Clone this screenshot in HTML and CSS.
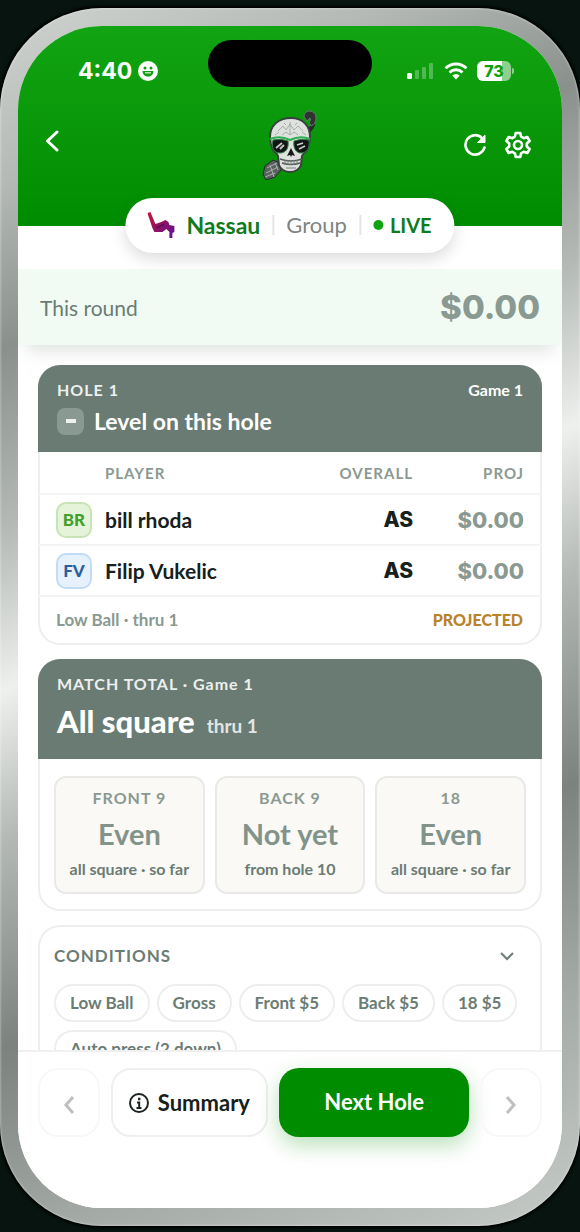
FILE: index.html
```html
<!DOCTYPE html>
<html lang="en">
<head>
    <meta charset="UTF-8">
    <meta name="viewport" content="width=device-width, initial-scale=1.0">
    <title>Nassau - Hole 1</title>
    <link rel="stylesheet" href="styles.css">
</head>
<body>
<div class="phone">
    <div class="screen">
        <!-- Header -->
        <header class="top">
            <div class="status-bar">
                <div class="clock">
                    <span>4:40</span>
                    <svg width="20" height="20" viewBox="0 0 20 20"><circle cx="10" cy="10" r="10" fill="#fff"/><circle cx="7" cy="7" r="1.500" fill="#0e9f0e"/><circle cx="13" cy="7" r="1.500" fill="#0e9f0e"/><path d="M4.500 10h11c0 3.500-2.500 5.500-5.500 5.500s-5.500-2-5.500-5.500z" fill="#0e9f0e"/><path d="M7 11h6v1.500H7z" fill="#fff" opacity=".7"/></svg>
                </div>
                <div class="island"></div>
                <div class="signals">
                    <svg width="28" height="18" viewBox="0 0 28 18" fill="#fff"><rect x="0" y="11" width="5" height="6" rx="1.500"/><g opacity=".28"><rect x="8" y="8" width="4" height="9" rx="1"/><rect x="15" y="5" width="4" height="12" rx="1"/><rect x="22" y="1" width="4" height="16" rx="1"/></g></svg>
                    <svg width="24" height="18" viewBox="0 0 24 18" fill="none" stroke="#fff" stroke-width="2.800"><path d="M1.500 6.300a15 15 0 0 1 21 0"/><path d="M5.500 10.400a9.300 9.300 0 0 1 13 0"/><path d="M8.300 13.400a5.300 5.300 0 0 1 7.400 0L12 17.500z" fill="#fff" stroke="none"/></svg>
                    <div class="battery">73</div>
                </div>
            </div>
            <nav class="nav">
                <button class="icon-btn back" aria-label="Back">
                    <svg width="14" height="22" viewBox="0 0 14 22" fill="none" stroke="#fff" stroke-width="3" stroke-linecap="round" stroke-linejoin="round"><path d="M12 2 2.500 11l9.500 9"/></svg>
                </button>
                <svg class="logo" width="56" height="70" viewBox="0 0 56 70">
                    <!-- club behind the skull -->
                    <path d="M43 26l7-9q2-3 0-7" fill="none" stroke="#252b29" stroke-width="4"/>
                    <path d="M42 7q0-6 6-6 6 1 6 7 0 6-5 8l-2-4q3-2 1-4l-3 3z" fill="#2e3331" stroke="#6c7570" stroke-width="1"/>
                    <path d="M3 56l8-6 7 3 1 7-6 7-9 3-3-6z" fill="#59605d" stroke="#252b29" stroke-width="1"/>
                    <path d="M5 58l10-5M4 63l12-6M3 67l10-4M8 55l4 12M13 53l3 7" stroke="#a9afac" stroke-width="1"/>
                    <!-- skull -->
                    <path d="M29 8C16 8 8 16 8 27c0 6 1 9 3 13 2 3 4 3 5 6l1 9c1 4 6 7 11 7s10-3 11-7l1-9c1-3 4-3 5-6 2-4 3-8 3-13C48 16 41 8 29 8z" fill="#dfe1df" stroke="#39403d" stroke-width="2"/>
                    <path d="M16 21l5-5 3 4 4-6 4 6 4-4 5 5M20 25l4-3 4 3 4-3 4 3M28 12v12M13 25l4-3M44 25l-4-3M22 13l2 2M35 13l-2 2" fill="none" stroke="#a7ada9" stroke-width="1"/>
                    <path d="M8 29q10-4 20 1 10-5 20-1" fill="none" stroke="#2fae52" stroke-width="2"/>
                    <path d="M11 30q8-2 15 1c1 7-2 12-8 12s-9-5-7-13zM47 30q-8-2-15 1c-1 7 2 12 7 12 6 0 9-5 8-13z" fill="#111614" stroke="#2f7a48" stroke-width="1"/>
                    <path d="M14 38l6-5M18 39l4-4M35 35l6-2M37 39l6-3" stroke="#c6cac8" stroke-width="1.800"/>
                    <path d="M29 38l-4 8 3-1 1 2 1-2 3 1z" fill="#151918"/>
                    <path d="M18 49q11 4 22 0M20 53q9 3 18 0" fill="none" stroke="#515855" stroke-width="1.400"/>
                    <path d="M23 50v5M26 50v5M29 50v5M32 50v5M35 50v5M24 58h10" fill="none" stroke="#7d8481" stroke-width="1"/>
                </svg>
                <div class="actions">
                    <button class="icon-btn" aria-label="Refresh">
                        <svg width="24" height="24" viewBox="0 0 24 24" fill="none" stroke="#fff" stroke-width="2.600" stroke-linecap="round"><path d="M21.500 14.500a9.700 9.700 0 1 1-2.200-9.200"/><path d="M15 9.500h7V2.500z" fill="#fff" stroke="#fff" stroke-width="1" stroke-linejoin="round"/></svg>
                    </button>
                    <button class="icon-btn" aria-label="Settings">
                        <svg width="28" height="28" viewBox="0 0 28 28" fill="none" stroke="#fff" stroke-width="2.600" stroke-linejoin="round"><path d="M11.700 2h4.600l.8 3.700 2.600 1.500 3.600-1.200 2.300 4-2.800 2.500v3l2.800 2.500-2.300 4-3.600-1.200-2.600 1.500-.8 3.700h-4.600l-.8-3.700-2.600-1.500L4.700 22l-2.300-4 2.800-2.500v-3L2.400 10l2.300-4 3.600 1.200 2.600-1.500z"/><circle cx="14" cy="14" r="4"/></svg>
                    </button>
                </div>
            </nav>
            <div class="game-pill">
                <svg width="28" height="28" viewBox="0 0 28 28">
                    <defs><linearGradient id="legs" x1="0" y1="0" x2="1" y2="1"><stop offset="0" stop-color="#c8143c"/><stop offset=".5" stop-color="#8f1260"/><stop offset="1" stop-color="#5b149c"/></linearGradient></defs>
                    <path d="M0 2l3-1 5 12 6-2 4-2 3 2 1 3 5 1 0 6-2 1v5h-3v-6l-3-3-4 3-8 0-2-4z" fill="url(#legs)"/>
                    <path d="M9 17l8-4" stroke="#5a1060" stroke-width="1.500"/>
                </svg>
                <strong>Nassau</strong>
                <i class="bar"></i>
                <span class="kind">Group</span>
                <i class="bar"></i>
                <span class="live"><i class="dot"></i>LIVE</span>
            </div>
        </header>

        <!-- Money for the round -->
        <section class="round">
            <span>This round</span>
            <b>$0.00</b>
        </section>

        <main class="content">
            <!-- Hole -->
            <section class="card">
                <div class="card-head">
                    <div class="head-line"><span class="caps">HOLE 1</span><span class="game-no">Game 1</span></div>
                    <h2><span class="level"></span>Level on this hole</h2>
                </div>
                <table class="players">
                    <thead>
                        <tr><th class="c-avatar"></th><th class="c-name">PLAYER</th><th class="c-overall">OVERALL</th><th class="c-proj">PROJ</th></tr>
                    </thead>
                    <tbody>
                        <tr><td><span class="avatar green">BR</span></td><td class="name">bill rhoda</td><td class="overall">AS</td><td class="proj">$0.00</td></tr>
                        <tr><td><span class="avatar blue">FV</span></td><td class="name">Filip Vukelic</td><td class="overall">AS</td><td class="proj">$0.00</td></tr>
                    </tbody>
                </table>
                <div class="card-foot"><span>Low Ball · thru 1</span><span class="projected">PROJECTED</span></div>
            </section>

            <!-- Match -->
            <section class="card">
                <div class="card-head match">
                    <div class="caps">MATCH TOTAL · Game 1</div>
                    <div class="total"><h1>All square</h1><span>thru 1</span></div>
                </div>
                <div class="tiles">
                    <div class="tile"><span class="t-label">FRONT 9</span><span class="t-value">Even</span><span class="t-note">all square · so far</span></div>
                    <div class="tile"><span class="t-label">BACK 9</span><span class="t-value">Not yet</span><span class="t-note">from hole 10</span></div>
                    <div class="tile"><span class="t-label">18</span><span class="t-value">Even</span><span class="t-note">all square · so far</span></div>
                </div>
            </section>

            <!-- Conditions -->
            <section class="card conditions">
                <button class="cond-head">CONDITIONS
                    <svg width="16" height="10" viewBox="0 0 16 10" fill="none" stroke="#6b7c74" stroke-width="2"><path d="M2 2l6 6 6-6"/></svg>
                </button>
                <div class="chips">
                    <span>Low Ball</span><span>Gross</span><span>Front $5</span><span>Back $5</span><span>18 $5</span><span>Auto press (2 down)</span>
                </div>
            </section>
        </main>

        <!-- Bottom bar -->
        <footer class="bottom">
            <button class="step" aria-label="Previous hole" disabled>
                <svg width="12" height="18" viewBox="0 0 12 18" fill="none" stroke="#bdc0be" stroke-width="3"><path d="M10 1 3 9l7 8"/></svg>
            </button>
            <button class="summary">
                <svg width="20" height="20" viewBox="0 0 20 20" fill="none" stroke="#1c2421" stroke-width="2"><circle cx="10" cy="10" r="9"/><path d="M8 9.500h2.200V15M7.500 15h5"/><path d="M9 6h2.400" stroke-width="2.400"/></svg>
                Summary
            </button>
            <button class="next">Next Hole</button>
            <button class="step" aria-label="Next hole" disabled>
                <svg width="12" height="18" viewBox="0 0 12 18" fill="none" stroke="#bdc0be" stroke-width="3"><path d="M2 1l7 8-7 8"/></svg>
            </button>
        </footer>
    </div>
</div>
</body>
</html>
```
FILE: styles.css
```css
* { box-sizing: border-box; }
body { margin: 0; padding: 8px 0 6px; height: 100vh; background: #07140f; font-family: Lato, "Liberation Sans", sans-serif; color: #16201c; }
button { font-family: inherit; padding: 0; border: none; background: none; cursor: pointer; }
h1, h2 { margin: 0; }

.phone { height: 100%; padding: 18px; border-radius: 102px; background: linear-gradient(155deg, #d0d3d0 0%, #b4b9b5 12%, #8a908b 23%, #b4b9b5 35%, #eef0ee 46%, #b4b9b5 56%, #7c837e 70%, #a4aaa6 84%, #c6cbc7 100%); box-shadow: inset 0 0 2px 1px rgba(255,255,255,0.3), 0 0 3px 2px #000; }
.screen { height: 100%; border-radius: 84px; overflow: hidden; background: #fff; display: flex; flex-direction: column; }

.top { position: relative; flex: none; padding: 14px 20px 46px; background: linear-gradient(#12a412, #008c00); }
.status-bar { display: grid; grid-template-columns: 1fr 164px 1fr; align-items: center; }
.clock { display: flex; align-items: center; gap: 6px; padding: 14px 0 0 40px; color: #fff; font: 700 23px/32px Inter, sans-serif; }
.island { height: 47px; border-radius: 24px; background: #000; }
.signals { display: flex; align-items: center; gap: 9px; padding: 14px 0 0 35px; }
.battery { position: relative; width: 34px; height: 20px; border-radius: 6px; background: linear-gradient(90deg, #fff 75%, #8fd08f 75%); color: #0e9f0e; font: 800 16px/20px Inter, sans-serif; text-align: center; }
.battery::after { content: ""; position: absolute; right: -3px; top: 7px; width: 2px; height: 6px; border-radius: 0 2px 2px 0; background: #8fd08f; }

.nav { display: grid; grid-template-columns: 1fr 56px 1fr; align-items: center; padding-top: 23px; }
.icon-btn { display: flex; }
.back { padding: 0 0 8px 7px; }
.actions { display: flex; align-items: center; justify-content: flex-end; gap: 17px; padding-right: 10px; }

.game-pill { position: absolute; left: 50%; bottom: -27px; transform: translateX(-50%); display: flex; align-items: center; height: 55px; padding: 0 23px 2px 22px; border-radius: 28px; background: #fff; box-shadow: 0 6px 16px rgba(0,0,0,0.14); font-size: 22px; white-space: nowrap; }
.game-pill strong { margin-left: 11px; color: #117a1c; font-size: 23px; }
.bar { width: 2px; height: 20px; margin: 0 12px; background: #e4e6e5; }
.kind { color: #7c8582; }
.live { display: flex; align-items: center; gap: 7px; color: #117a1c; font-size: 20px; font-weight: 700; }
.dot { width: 10px; height: 10px; border-radius: 50%; background: #0fa30f; }

.round { position: relative; flex: none; display: flex; align-items: center; justify-content: space-between; height: 76px; margin-top: 43px; padding: 0 22px; background: #f1fbf3; box-shadow: 0 14px 16px -8px rgba(60,90,70,0.16); color: #6b7c74; font-size: 21px; }
.round b { color: #8a9991; font: 800 33px/40px Inter, sans-serif; }

.content { flex: 1; min-height: 0; overflow-y: auto; scrollbar-width: none; padding: 20px 20px 0; display: flex; flex-direction: column; gap: 14px; }
/* inset line, so the dark heads can run to the edge */
.card { flex: none; border-radius: 22px; background: #fff; box-shadow: inset 0 0 0 2px #eeefed; overflow: hidden; }
.card-head { height: 87px; padding: 13px 19px 0; background: #697b72; color: #fff; }
.head-line { display: flex; justify-content: space-between; }
.caps { font-size: 16px; line-height: 24px; font-weight: 700; letter-spacing: 1px; color: #edf0ee; }
.game-no { font-size: 16px; line-height: 24px; font-weight: 700; }
.card-head h2 { display: flex; align-items: center; gap: 10px; margin-top: 4px; font-size: 23px; line-height: 30px; }
.level { width: 27px; height: 27px; border-radius: 8px; background: #8a9991; display: flex; align-items: center; justify-content: center; }
.level::before { content: ""; width: 10px; height: 4px; background: #eef1ef; }

.players { width: 100%; border-collapse: separate; border-spacing: 0; table-layout: fixed; }
.players th, .players td { padding: 0; border-bottom: 2px solid #f3f4f3; }
.players th { height: 43px; color: #8a9991; font-size: 15px; font-weight: 700; letter-spacing: 1px; text-align: left; }
.players td { height: 51px; }
.players .c-avatar { width: 67px; }
.players .c-overall { width: 110px; text-align: right; }
.players .c-proj { width: 129px; }
.players .c-proj, .players .proj { padding-right: 18px; text-align: right; }
.overall { text-align: right; }
.avatar { display: block; width: 36px; height: 36px; margin-left: 18px; border: 2px solid; border-radius: 10px; font-size: 17px; line-height: 31px; font-weight: 900; text-align: center; }
.avatar.green { border-color: #c9e4b4; background: #e5f4d9; color: #43a02a; }
.avatar.blue { border-color: #c3dcf6; background: #e6f1fd; color: #2d5f9e; }
.name { font-size: 21px; font-weight: 700; line-height: 24px; }
.overall { font: 800 21px/24px Inter, sans-serif; }
.proj { color: #8a9991; font: 800 22px/24px Inter, sans-serif; }
.card-foot { display: flex; justify-content: space-between; align-items: center; height: 48px; padding: 0 19px 4px 18px; color: #8a9991; font-size: 17px; font-weight: 700; }
.projected { color: #b9822c; font-size: 16px; font-weight: 900; }

.match { height: 100px; }
.total { display: flex; align-items: baseline; gap: 12px; margin-top: 4px; }
.total h1 { font-size: 31px; line-height: 42px; font-weight: 900; }
.total span { color: #e1e6e3; font-size: 19px; font-weight: 700; }
.tiles { display: grid; grid-template-columns: repeat(3, 1fr); gap: 10px; padding: 17px 16px; }
.tile { display: flex; flex-direction: column; align-items: center; height: 118px; padding-top: 9px; border: 2px solid #e9eae7; border-radius: 12px; background: #faf9f6; white-space: nowrap; }
.t-label { color: #8a9991; font-size: 16px; line-height: 22px; font-weight: 700; letter-spacing: 1px; }
.t-value { margin-top: 8px; color: #829389; font-size: 29px; line-height: 34px; font-weight: 700; }
.t-note { margin-top: 8px; color: #6b7c74; font-size: 16px; line-height: 20px; font-weight: 700; }

.conditions { padding: 19px 16px; }
.cond-head { display: flex; justify-content: space-between; align-items: center; width: 100%; padding-right: 11px; color: #6b7c74; font-size: 17px; line-height: 24px; font-weight: 700; letter-spacing: 1px; }
.chips { display: flex; flex-wrap: wrap; gap: 8px 7px; margin-top: 16px; }
.chips span { height: 38px; padding: 0 14px; border: 2px solid #edefed; border-radius: 19px; color: #6b7c74; font-size: 17px; line-height: 33px; font-weight: 700; white-space: nowrap; }

.bottom { flex: none; display: grid; grid-template-columns: 62fr 158fr 191fr 62fr; gap: 11px; height: 158px; padding: 16px 20px 71px; border-top: 2px solid #eff0ef; background: #fff; }
.bottom button { display: flex; align-items: center; justify-content: center; border-radius: 20px; }
.step { border: 2px solid #f8f8f8; padding-top: 4px; }
.summary { gap: 9px; border: 2px solid #eeefee; font-size: 22px; font-weight: 700; color: #16201c; }
.bottom .next { background: #008c00; color: #fff; font-size: 22px; font-weight: 700; padding-bottom: 3px; box-shadow: 0 8px 22px rgba(0,140,0,0.28); }
```
